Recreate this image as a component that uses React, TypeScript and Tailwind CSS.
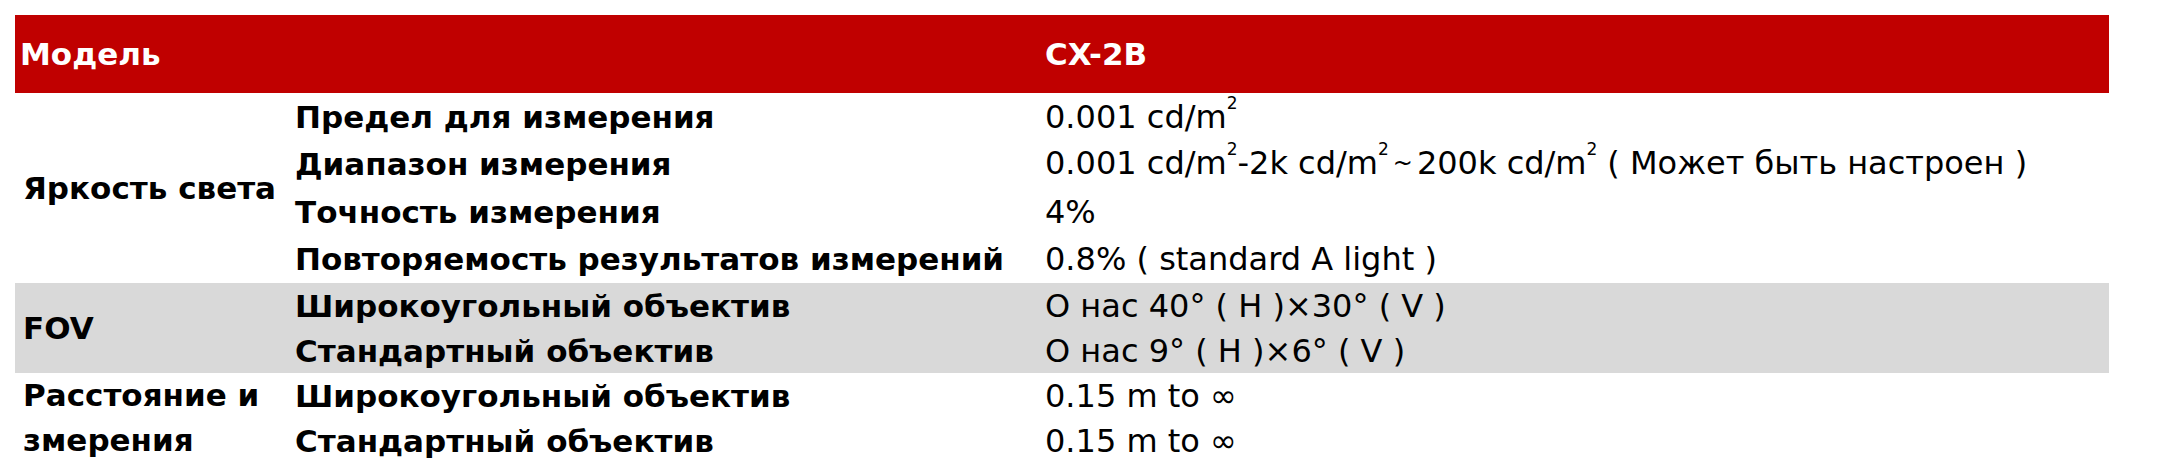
import React from "react";

const font = { fontFamily: "'DejaVu Sans', Verdana, sans-serif" };

function Sup({ children }: { children: React.ReactNode }) {
  return <span className="text-[17px] align-top relative -top-[2px] leading-none">{children}</span>;
}

type Row = { name: string; value: React.ReactNode };

function Group({
  label,
  rows,
  rowH,
  gray,
}: {
  label: React.ReactNode;
  rows: Row[];
  rowH: string;
  gray?: boolean;
}) {
  return (
    <div className={`flex ${gray ? "bg-[#d9d9d9]" : "bg-white"}`}>
      <div className="w-[272px] shrink-0 flex items-center pl-[8px] font-bold text-[31px] leading-[45px]">
        <span>{label}</span>
      </div>
      <div className="flex flex-col flex-1">
        {rows.map((r, i) => (
          <div key={i} className={`flex items-center ${rowH}`}>
            <div className="w-[750px] shrink-0 pl-[8px] font-bold text-[31px] leading-[40px] whitespace-nowrap">{r.name}</div>
            <div className="flex-1 pl-[8px] text-[32px] leading-[40px] whitespace-nowrap">{r.value}</div>
          </div>
        ))}
      </div>
    </div>
  );
}

export default function App() {
  return (
    <div className="w-[2166px] h-[474px] bg-white pt-[15px] px-[15px] text-black" style={font}>
      <div className="w-[2094px]">
        <div className="flex items-center h-[78px] bg-[#c00000] text-white font-bold text-[31px]">
          <div className="w-[1022px] shrink-0 pl-[5px]">Модель</div>
          <div className="flex-1 pl-[8px]">CX-2B</div>
        </div>
        <Group
          label="Яркость света"
          rowH="h-[47.5px]"
          rows={[
            { name: "Предел для измерения", value: <>0.001 cd/m<Sup>2</Sup></> },
            {
              name: "Диапазон измерения",
              value: (
                <>
                  0.001 cd/m<Sup>2</Sup>-2k cd/m<Sup>2</Sup>
                  <span className="text-[24px] mx-[4px] relative -top-[3px]">~</span>200k cd/m<Sup>2</Sup>
                  <span className="ml-[10px]">( Может быть настроен )</span>
                </>
              ),
            },
            { name: "Точность измерения", value: "4%" },
            { name: "Повторяемость результатов измерений", value: "0.8% ( standard A light )" },
          ]}
        />
        <Group
          label="FOV"
          gray
          rowH="h-[45px]"
          rows={[
            { name: "Широкоугольный объектив", value: "О нас 40° ( H )×30° ( V )" },
            { name: "Стандартный объектив", value: "О нас 9° ( H )×6° ( V )" },
          ]}
        />
        <Group
          label="Расстояние и змерения"
          rowH="h-[45px]"
          rows={[
            { name: "Широкоугольный объектив", value: "0.15 m to ∞" },
            { name: "Стандартный объектив", value: "0.15 m to ∞" },
          ]}
        />
      </div>
    </div>
  );
}
